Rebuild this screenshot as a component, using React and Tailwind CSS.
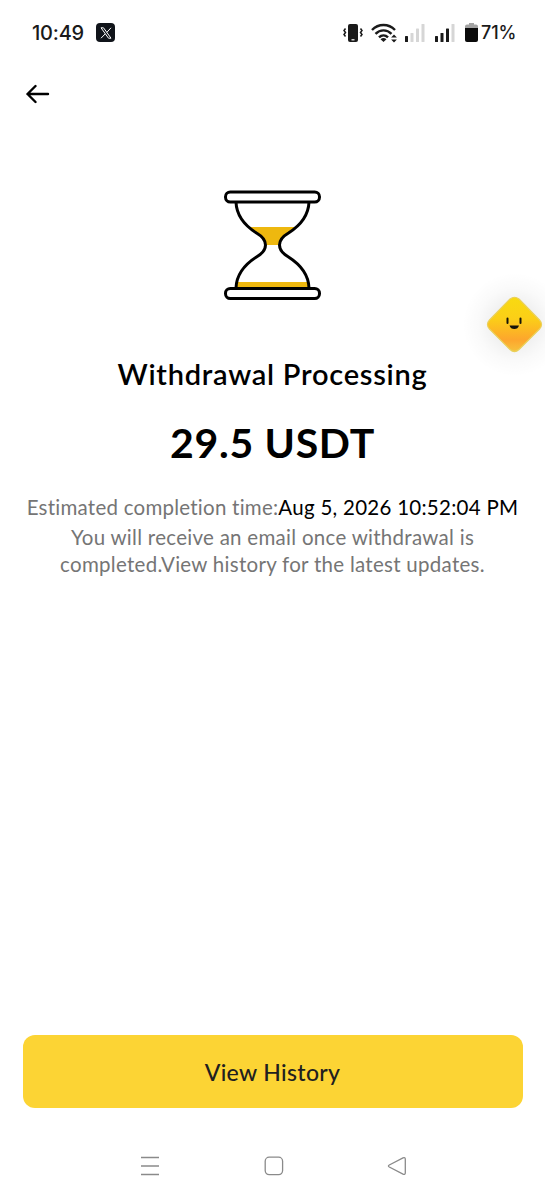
function VibrateIcon() {
  return (
    <svg width="20" height="20" viewBox="0 0 20 20" fill="none">
      <rect x="5" y="1" width="10" height="18" rx="2" fill="#1a1a1a" />
      <path d="M8.5 16.8h3" stroke="#fff" strokeWidth="1.2" />
      <path d="M2.5 5.5L1 7.5l1.5 2L1 11.5l1.5 2M17.5 5.5l1.5 2-1.5 2 1.5 2-1.5 2" stroke="#1a1a1a" strokeWidth="1.5" />
    </svg>
  );
}

function WifiIcon() {
  return (
    <svg width="27" height="20" viewBox="0 0 27 20" fill="none" stroke="#1a1a1a" strokeWidth="2.4">
      <path d="M1 7C7.5 0.3 17.5 0.3 24 7" />
      <path d="M4.5 10.8C9 6.2 16 6.2 20.5 10.8" />
      <path d="M8 14.4C10.6 11.8 14.4 11.8 17 14.4" />
      <path d="M12.5 19L9.5 16.2Q12.5 13.8 15.5 16.2Z" fill="#1a1a1a" stroke="none" />
      <path d="M20.1 14.6l2.9-3 2.9 3zM20.1 16.4l2.9 3 2.9-3z" fill="#1a1a1a" stroke="none" />
    </svg>
  );
}

function SignalIcon({ level }) {
  const bars = [
    { x: 0, y: 12, h: 6 },
    { x: 5.5, y: 9, h: 9 },
    { x: 11, y: 4.5, h: 13.5 },
    { x: 16.5, y: 0, h: 18 },
  ];

  return (
    <svg width="20" height="18" viewBox="0 0 20 18">
      {bars.map((bar, i) => (
        <rect key={bar.x} x={bar.x} y={bar.y} width="3" height={bar.h} rx="0.6" fill={i < level ? '#1a1a1a' : '#d6d6d6'} />
      ))}
    </svg>
  );
}

function BatteryIcon() {
  return (
    <svg width="13" height="19" viewBox="0 0 13 19">
      <path d="M4 0h5v1.5h2q2 0 2 2V5H0V3.5q0-2 2-2h2z" fill="#a3a3a3" />
      <path d="M0 5h13v12q0 2-2 2H2q-2 0-2-2z" fill="#0a0a0a" />
    </svg>
  );
}

function StatusBar() {
  return (
    <div className="flex h-[65px] shrink-0 items-center justify-between pl-8 pr-[29px] font-['Inter',sans-serif] text-[#1a1a1a]">
      <div className="flex items-center gap-3">
        <span className="w-[52px] whitespace-nowrap text-[20px] font-medium leading-6 tracking-[-0.2px]">10:49</span>
        <span className="flex size-[19px] items-center justify-center rounded-[4px] bg-[#10141a]">
          <svg width="12" height="12" viewBox="0 0 12 12" fill="none" stroke="#fff">
            <path d="M1 .8h2.5l7.5 10.4H8.5zM11 .8L6.9 5.3M5.1 7L1 11.2" strokeWidth="1" />
          </svg>
        </span>
      </div>
      <div className="flex items-center">
        <VibrateIcon />
        <div className="ml-2"><WifiIcon /></div>
        <div className="ml-[7px]"><SignalIcon level={1} /></div>
        <div className="ml-[10px]"><SignalIcon level={3} /></div>
        <div className="ml-[10px]"><BatteryIcon /></div>
        <span className="ml-[3px] w-[35px] whitespace-nowrap text-[18px] font-medium leading-6 tracking-[-0.1px]">71%</span>
      </div>
    </div>
  );
}

function Hourglass() {
  return (
    <svg width="98" height="110" viewBox="0.5 0 98 110" fill="none">
      <path d="M25 37h47Q67 43 61 46.5Q55 51 55 55H43Q43 51 37 46.5Q31 43 25 37z" fill="#eeb80f" />
      <path d="M13 92h71l2 6H12z" fill="#eeb80f" />
      <g stroke="#000" strokeWidth="3">
        <path d="M12.5 12C13 26 22 36 33 43C45 50 45 60 33 67C22 74 13 84 12.5 98" />
        <path d="M85.5 12C85 26 76 36 65 43C53 50 53 60 65 67C76 74 85 84 85.5 98" />
        <rect x="2" y="2" width="94" height="10" rx="4.8" fill="#fff" />
        <rect x="2" y="98.5" width="94" height="10" rx="4.8" fill="#fff" />
      </g>
    </svg>
  );
}

function Mascot() {
  return (
    <svg width="105" height="105" viewBox="0 0 105 105" fill="none">
      <defs>
        <radialGradient id="halo">
          <stop offset="0.3" stopColor="#000" stopOpacity="0.07" />
          <stop offset="0.7" stopColor="#000" stopOpacity="0.02" />
          <stop offset="1" stopColor="#000" stopOpacity="0" />
        </radialGradient>
        <linearGradient id="body" x1="52" y1="24" x2="52" y2="80" gradientUnits="userSpaceOnUse">
          <stop stopColor="#f8db10" />
          <stop offset="0.4" stopColor="#fbcf17" />
          <stop offset="0.78" stopColor="#fda62d" />
          <stop offset="1" stopColor="#f6c33d" />
        </linearGradient>
      </defs>
      <circle cx="52.5" cy="52.5" r="52" fill="url(#halo)" />
      <path d="M48 27Q52.5 23.5 57 27L77.5 48Q81.5 52.5 77.5 57L57 77.5Q52.5 81.5 48 77.5L27.5 57Q23.5 52.5 27.5 48Z" fill="url(#body)" stroke="#ead05a" strokeWidth="1.2" />
      <path d="M45.5 46.5v4.5M58.5 46.5v4.5" stroke="#15130a" strokeWidth="2" strokeLinecap="round" />
      <path d="M47.5 53.5h9.5q-1 3.5-4.7 3.5t-4.8-3.5z" fill="#15130a" />
    </svg>
  );
}

function NavigationBar() {
  return (
    <div className="flex h-10 shrink-0 items-center justify-between pl-[140px] pr-[138px]">
      <svg width="20" height="20" viewBox="0 0 20 20" stroke="#8a8a8a" strokeWidth="1.4">
        <path d="M1 1.5h18M1 10h18M1 18.5h18" />
      </svg>
      <svg width="20" height="20" viewBox="0 0 20 20" fill="none" stroke="#8a8a8a" strokeWidth="1.3">
        <rect x="1.2" y="1.2" width="17.4" height="17.4" rx="4" />
      </svg>
      <svg width="20" height="20" viewBox="0 0 20 20" fill="none" stroke="#8a8a8a" strokeWidth="1.3">
        <path d="M2.3 9L16 1.8Q18.3 1 18.3 3.3V16.7Q18.3 19 16 18.2L2.3 11Q.5 10 2.3 9Z" />
      </svg>
    </div>
  );
}

export default function App() {
  return (
    <div className="relative flex h-[1199px] w-[545px] flex-col overflow-hidden bg-white font-['Lato',sans-serif] text-black">
      <StatusBar />

      <header className="flex h-[57px] shrink-0 items-center pl-[26px]">
        <button type="button" aria-label="Back">
          <svg width="24" height="20" viewBox="0 0 24 20" fill="none" stroke="#000" strokeWidth="2.4" strokeLinecap="round" strokeLinejoin="round">
            <path d="M22 10H1.5M9.5 2L1.5 10l8 8" />
          </svg>
        </button>
      </header>

      <main className="flex flex-1 flex-col items-center pt-[68px] text-center">
        <Hourglass />
        <h1 className="mt-[56px] whitespace-nowrap text-[29px] font-semibold leading-9 tracking-[0.74px]">Withdrawal Processing</h1>
        <p className="mt-[25px] whitespace-nowrap text-[41px] font-bold leading-[52px] tracking-[0.7px]">29.5 USDT</p>
        <div className="mt-[24px] whitespace-nowrap text-[20.5px] leading-7 text-[#757575]">
          <p className="mb-0.5">
            <span className="tracking-[0.24px]">Estimated completion time:</span>
            <span className="tracking-[0.27px] text-black">Aug 5, 2026 10:52:04 PM</span>
          </p>
          <p className="tracking-[0.28px]">You will receive an email once withdrawal is</p>
          <p className="-mt-px tracking-[0.28px]">completed.View history for the latest updates.</p>
        </div>
      </main>

      <div className="shrink-0 px-[22.5px] pb-[38px]">
        <button type="button" className="flex h-[73px] w-full items-center justify-center rounded-[12px] bg-[#fcd434] pt-px text-[23px] font-medium tracking-[0.35px] text-[#202020]">
          <span>View History</span>
        </button>
      </div>

      <NavigationBar />
      <div className="h-[13px] shrink-0" />

      {/* Floating assistant */}
      <div className="absolute left-[462px] top-[272px]">
        <Mascot />
      </div>
    </div>
  );
}
